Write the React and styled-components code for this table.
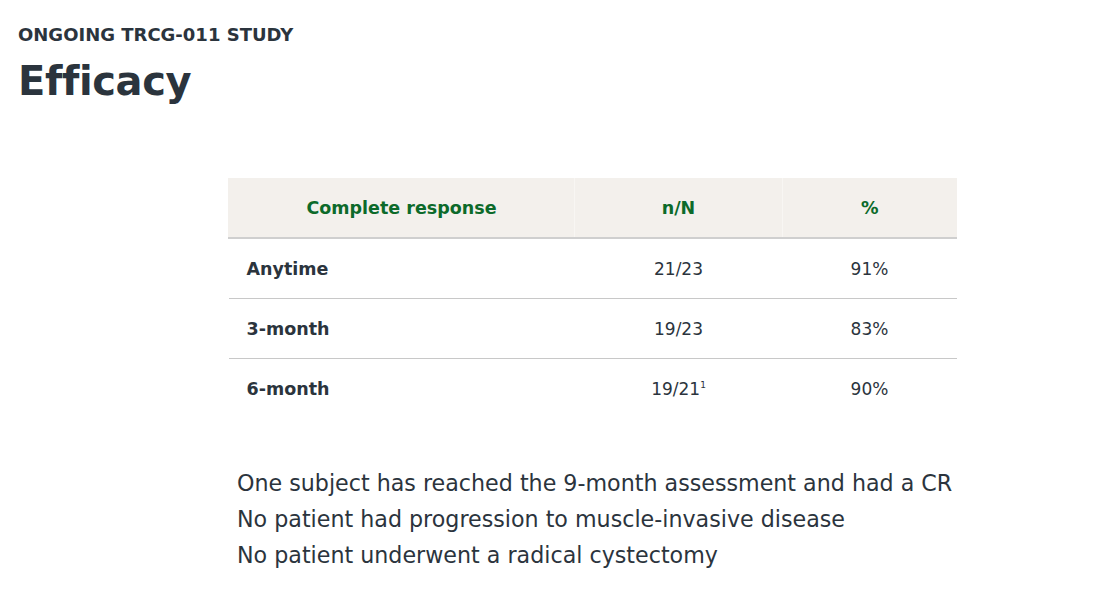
import React from 'react';
import styled, { createGlobalStyle } from 'styled-components';

const GlobalStyle = createGlobalStyle`
  body {
    margin: 0;
    background: #ffffff;
    font-family: "DejaVu Sans", "Open Sans", sans-serif;
    color: #2b343d;
  }
`;

const Page = styled.div`
  padding: 23px 18px 0 18px;
`;

const Eyebrow = styled.div`
  font-size: 18px;
  font-weight: 700;
  line-height: 24px;
`;

const Title = styled.h1`
  margin: 9px 0 0 0;
  font-size: 40px;
  font-weight: 700;
  line-height: 50px;
  letter-spacing: -0.4px;
`;

const Content = styled.div`
  margin: 72px 0 0 210px;
  width: 728px;
`;

const Table = styled.table`
  width: 728px;
  border-collapse: collapse;
  table-layout: fixed;
`;

const HeadCell = styled.th`
  background: #f3f0ec;
  color: #0c6a2a;
  font-size: 17.5px;
  font-weight: 700;
  height: 59px;
  padding: 0;
  text-align: center;
  border-bottom: 2px solid #cfcfcf;
  border-left: 1px solid ${p => (p.$first ? '#f3f0ec' : '#f8f6f3')};
`;

const Row = styled.tr`
  border-bottom: ${p => (p.$last ? 'none' : '1px solid #c8c8c8')};
`;

const LabelCell = styled.td`
  height: 59px;
  padding: 0 0 0 18px;
  font-size: 17.5px;
  font-weight: 700;
`;

const ValueCell = styled.td`
  height: 59px;
  padding: 0;
  text-align: center;
  font-size: 17px;
  font-weight: 400;
`;

const Sup = styled.sup`
  font-size: 9px;
  vertical-align: 7px;
  line-height: 0;
`;

const Notes = styled.div`
  margin: 47px 0 0 9px;
  font-size: 22.2px;
  line-height: 36px;
`;

const rows = [
  { label: 'Anytime', n: '21/23', pct: '91%' },
  { label: '3-month', n: '19/23', pct: '83%' },
  { label: '6-month', n: '19/21', sup: '1', pct: '90%' },
];

const notes = [
  'One subject has reached the 9-month assessment and had a CR',
  'No patient had progression to muscle-invasive disease',
  'No patient underwent a radical cystectomy',
];

export default function App() {
  return (
    <Page>
      <GlobalStyle />
      <Eyebrow>ONGOING TRCG-011 STUDY</Eyebrow>
      <Title>Efficacy</Title>
      <Content>
        <Table>
          <colgroup>
            <col style={{ width: 346 }} />
            <col style={{ width: 208 }} />
            <col style={{ width: 174 }} />
          </colgroup>
          <thead>
            <tr>
              <HeadCell $first>Complete response</HeadCell>
              <HeadCell>n/N</HeadCell>
              <HeadCell>%</HeadCell>
            </tr>
          </thead>
          <tbody>
            {rows.map((r, i) => (
              <Row key={r.label} $last={i === rows.length - 1}>
                <LabelCell>{r.label}</LabelCell>
                <ValueCell>
                  {r.n}
                  {r.sup && <Sup>{r.sup}</Sup>}
                </ValueCell>
                <ValueCell>{r.pct}</ValueCell>
              </Row>
            ))}
          </tbody>
        </Table>
        <Notes>
          {notes.map(n => (
            <div key={n}>{n}</div>
          ))}
        </Notes>
      </Content>
    </Page>
  );
}
